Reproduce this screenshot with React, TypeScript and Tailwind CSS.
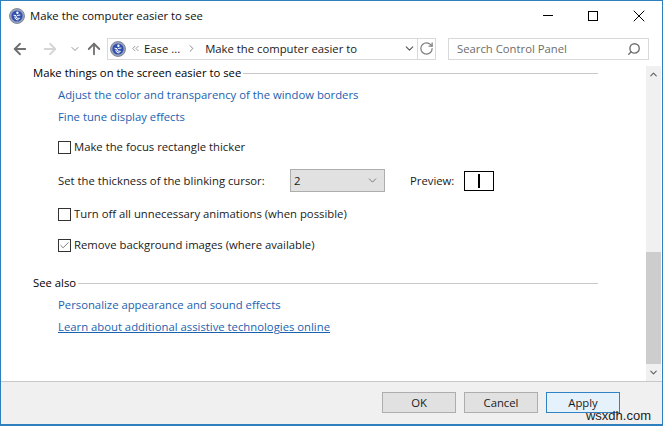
import { ArrowLeft, ArrowRight, ArrowUp, Check, ChevronDown, ChevronRight, ChevronUp, ChevronsLeft, RotateCw, Search, X } from "lucide-react";

function AppIcon({ size = 16 }: { size?: number }) {
  return (
    <svg width={size} height={size} viewBox="0 0 16 16" className="shrink-0">
      <circle cx="8" cy="8" r="7.5" fill="#9aa3b8" stroke="#6f7890" strokeWidth="0.8" />
      <circle cx="8" cy="8" r="5.6" fill="#2f4fb0" />
      <circle cx="8.4" cy="4.8" r="1.2" fill="#ffffff" />
      <path d="M4.5 7.2 L7 7.6 L7.4 10 L10.8 10.4 M8 7.4 L11.4 7 M6 8.5 A2.6 2.6 0 0 0 9.6 11.6" stroke="#ffffff" strokeWidth="1" fill="none" />
    </svg>
  );
}

function Heading({ children }: { children: string }) {
  return (
    <div className="flex items-center gap-[2px] w-[565px] h-4 text-black">
      <span>{children}</span>
      <div className="flex-1 h-px bg-[#c8c8c8]" />
    </div>
  );
}

function Option({ label, checked }: { label: string; checked?: boolean }) {
  return (
    <div className="flex items-center gap-[3px] ml-[25px] h-4 text-[#1a1a1a]">
      <div className="w-[13px] h-[13px] border border-[#333333] bg-white flex items-center justify-center">
        {checked && <Check size={11} strokeWidth={1.4} className="text-[#333333]" />}
      </div>
      <span>{label}</span>
    </div>
  );
}

function FooterButton({ label, active }: { label: string; active?: boolean }) {
  return (
    <div
      className={`w-[74px] h-[21px] flex items-center justify-center border text-[#1a1a1a] ${
        active ? "border-[#2f82c4] bg-[#e5f1fb]" : "border-[#adadad] bg-[#e1e1e1]"
      }`}
    >
      {label}
    </div>
  );
}

export default function App() {
  return (
    <div className="relative w-[663px] h-[426px] flex flex-col overflow-hidden border border-[#2d7fbd] border-b-2 bg-white text-[11.3px] leading-4 font-['Open_Sans','Noto_Sans',sans-serif]">
      {/* title bar */}
      <div className="h-[29px] shrink-0 flex items-center pl-[8px]">
        <AppIcon />
        <span className="ml-[5px] text-[#111111]">Make the computer easier to see</span>
        <div className="ml-auto flex items-center pr-[13px]">
          <div className="w-[10px] h-px bg-black" />
          <div className="ml-[35px] w-[10px] h-[10px] border border-black" />
          <X size={20} strokeWidth={1.2} className="ml-[31px] text-black" />
        </div>
      </div>

      {/* nav row */}
      <div className="h-[23px] mt-[7px] shrink-0 flex items-center">
        <ArrowLeft size={18} strokeWidth={2.4} className="ml-[10px] text-[#6f6f6f]" />
        <ArrowRight size={18} strokeWidth={2.4} className="ml-[12px] text-[#d5d5d5]" />
        <ChevronDown size={12} strokeWidth={2} className="ml-[10px] text-[#8f8f8f]" />
        <ArrowUp size={18} strokeWidth={2.4} className="ml-[4px] text-[#6f6f6f]" />
        <div className="ml-[4px] w-[329px] h-[22px] border border-[#d9d9d9] flex items-center">
          <span className="ml-[2px]"><AppIcon /></span>
          <ChevronsLeft size={11} strokeWidth={1.5} className="ml-[4px] text-[#6f6f6f]" />
          <span className="ml-[3px] text-[#1a1a1a] whitespace-nowrap">Ease ...</span>
          <ChevronRight size={11} strokeWidth={2} className="ml-[6px] text-[#808080]" />
          <span className="ml-[8px] text-[#1a1a1a] flex-1 whitespace-nowrap">Make the computer easier to</span>
          <ChevronDown size={13} strokeWidth={2} className="text-[#555555] mr-[1px]" />
          <div className="w-px h-full bg-[#d9d9d9]" />
          <RotateCw size={15} strokeWidth={2} className="mx-[1px] text-[#808080]" />
        </div>
        <div className="ml-[12px] w-[201px] h-[22px] border border-[#d9d9d9] flex items-center justify-between pl-[8px] pr-[7px]">
          <span className="text-[#6d6d6d]">Search Control Panel</span>
          <Search size={14} strokeWidth={2.4} className="text-[#707070] -scale-x-100" />
        </div>
      </div>

      {/* content + scrollbar */}
      <div className="flex-1 flex min-h-0">
        <div className="flex-1 flex flex-col pl-[32px] pt-[5px]">
          <Heading>Make things on the screen easier to see</Heading>
          <a className="ml-[25px] mt-[6px] text-[#1a62b0]">Adjust the color and transparency of the window borders</a>
          <a className="ml-[25px] mt-[6px] text-[#1a62b0]">Fine tune display effects</a>
          <div className="mt-[14px]"><Option label="Make the focus rectangle thicker" /></div>
          <div className="ml-[25px] mt-[14px] h-[23px] flex items-center text-[#1a1a1a]">
            <span className="w-[232px]">Set the thickness of the blinking cursor:</span>
            <div className="w-[95px] h-[23px] border border-[#adadad] bg-[#e1e1e1] flex items-center justify-between pl-[3px] pr-[5px]">
              <span>2</span>
              <ChevronDown size={13} strokeWidth={1.2} className="text-[#444444]" />
            </div>
            <span className="ml-[25px] w-[54px]">Preview:</span>
            <div className="w-[30px] h-[20px] border border-black flex items-center justify-center">
              <div className="w-[2px] h-[14px] bg-black" />
            </div>
          </div>
          <div className="mt-[14px]"><Option label="Turn off all unnecessary animations (when possible)" /></div>
          <div className="mt-[15px]"><Option label="Remove background images (where available)" checked /></div>
          <div className="mt-[22px]"><Heading>See also</Heading></div>
          <a className="ml-[25px] mt-[6px] text-[#1a62b0]">Personalize appearance and sound effects</a>
          <a className="ml-[25px] mt-[6px] text-[#1a62b0] underline">Learn about additional assistive technologies online</a>
        </div>

        {/* scrollbar */}
        <div className="w-[15px] mr-px mt-[6px] shrink-0 bg-[#f0f0f0] flex flex-col items-center">
          <div className="h-[17px] flex items-center"><ChevronUp size={11} strokeWidth={2.4} className="text-[#606060]" /></div>
          <div className="flex-1" />
          <div className="w-full h-[112px] bg-[#cdcdcd]" />
          <div className="h-[17px] flex items-center"><ChevronDown size={11} strokeWidth={2.4} className="text-[#606060]" /></div>
        </div>
      </div>

      {/* footer */}
      <div className="h-[43px] shrink-0 border-t border-[#c8c8c8] bg-[#f0f0f0] flex items-start justify-end gap-2 pt-[10px] pr-[42px]">
        <FooterButton label="OK" />
        <FooterButton label="Cancel" />
        <FooterButton label="Apply" active />
      </div>

      {/* watermark */}
      <span className="absolute right-[11px] bottom-0 text-[13px] text-[#222222] font-['Liberation_Sans',sans-serif]">wsxdh.com</span>
    </div>
  );
}
